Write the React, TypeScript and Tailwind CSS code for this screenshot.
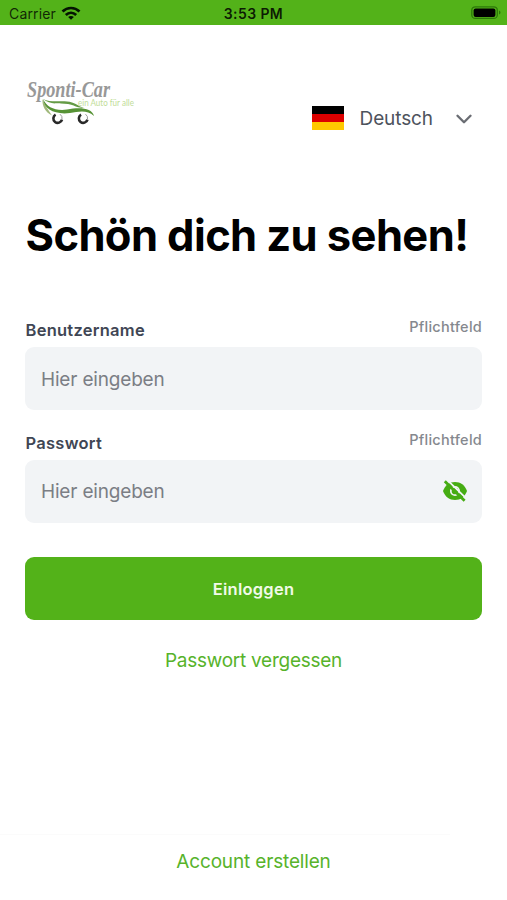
import { ChevronDown } from "lucide-react";

function StatusBar() {
  return (
    <header className="grid h-[25px] grid-cols-3 items-center bg-[#53b219] pt-[2px] text-black">
      <div className="flex items-center gap-[5px] pl-[9px]">
        <span className="text-[14px] leading-5 tracking-[0.15px] text-black/80">Carrier</span>
        <svg className="-mt-px" width="20" height="15" viewBox="0 0 20 15" fill="none" stroke="#041402" strokeWidth="2.7">
          <path d="M1.5 5.5C6.4.8 13.6.8 18.5 5.5M4.8 9C7.9 6.1 12.1 6.1 15.2 9" />
          <path d="M10 13.8L7.1 11C8.7 9.7 11.3 9.7 12.9 11Z" fill="#041402" stroke="none" />
        </svg>
      </div>
      <span className="text-center text-[14px] leading-5 font-semibold tracking-[0.4px] text-black/85">3:53 PM</span>
      <svg className="-mt-px mr-[6px] justify-self-end" width="30" height="14" viewBox="0 0 30 14">
        <rect x=".8" y=".8" width="25.5" height="11.6" rx="3.5" fill="none" stroke="#2c7908" strokeWidth="1.3" />
        <rect x="2.6" y="2.4" width="21.8" height="8.6" rx="2" fill="#000" />
        <path d="M28 4.6c2 .8 2 3.2 0 4z" fill="#2c7908" />
      </svg>
    </header>
  );
}

function Logo() {
  return (
    <svg className="overflow-visible" width="120" height="50" viewBox="0 0 120 50" role="img" aria-label="Sponti-Car">
      <text x="2" y="19.5" textLength="83" lengthAdjust="spacingAndGlyphs" fill="#989898" className="font-['Liberation_Serif',serif] text-[23px] font-bold italic">Sponti-Car</text>
      <text x="53" y="28.7" textLength="56" lengthAdjust="spacingAndGlyphs" fill="#bfdd98" className="font-[Lato,sans-serif] text-[9px]">ein Auto für alle</text>
      <path d="M18 22C27 26.5 38 22.5 47 25.5C53 27.5 54 30 59 30.5C52 31.5 50 28 43 27C33 25.6 26 28.5 18 22Z" fill="#649b45" />
      <path d="M17.5 22C17 29 20 35 27 38.5C23 32 20 29 17.5 22Z" fill="#a1b97c" />
      <path d="M18 22C22 30.5 30 34 42 32.6C55 30 67 31 69 39C62 32.5 54 34.5 45 36C30 38 19 32 18 22Z" fill="#579336" />
      <g fill="none" stroke="#292929" strokeWidth="2.6">
        <path d="M30.6 37.6A4.4 4.4 0 1 0 37 42.6" />
        <path d="M56.1 37.6A4.4 4.4 0 1 0 62.5 42.6" />
      </g>
      <g fill="none" stroke="#999" strokeWidth="1">
        <path d="M37 42.3A5 5 0 0 0 35 37.2" />
        <path d="M62.5 42.3A5 5 0 0 0 60.5 37.2" />
      </g>
    </svg>
  );
}

function HiddenEye() {
  return (
    <svg width="26" height="22" viewBox="0 0 26 22" fill="none" aria-hidden="true">
      <path d="M1 11C3 5.2 7.6 2 13 2S23 5.2 25 11C23 16.8 18.4 20 13 20S3 16.8 1 11Z" fill="#46ac13" />
      <circle cx="13" cy="11" r="4.2" stroke="#f2f4f6" strokeWidth="1.7" />
      <path d="M4.8-.4L25 19.2" stroke="#f2f4f6" strokeWidth="1.8" />
      <path d="M2.8 1.3L22.6 20.8" stroke="#46ac13" strokeWidth="2.8" />
    </svg>
  );
}

function Field({ label, secret = false }: { label: string; secret?: boolean }) {
  return (
    <label className="block">
      <span className="flex h-[29px] justify-between">
        <span className="pt-[2px] pl-[0.5px] text-[16.5px] leading-5 font-semibold tracking-[0.26px] text-[#404654]">{label}</span>
        <span className="text-[14.5px] leading-[18px] font-medium tracking-[0.25px] text-[#85888e]">Pflichtfeld</span>
      </span>
      <span className="flex h-[63px] items-center rounded-[9px] bg-[#f2f4f6] pr-[14px] pl-4">
        <input
          type={secret ? "password" : "text"}
          placeholder="Hier eingeben"
          className="min-w-0 flex-1 bg-transparent pt-[2px] text-[19px] leading-6 tracking-[-0.18px] text-[#7b7e85] outline-none placeholder:text-[#7b7e85]"
        />
        {secret && <HiddenEye />}
      </span>
    </label>
  );
}

export default function App() {
  return (
    <div className="flex h-[900px] w-[507px] flex-col overflow-hidden bg-white font-[Inter,sans-serif]">
      <StatusBar />
      <main className="flex flex-1 flex-col px-[25px]">
        <div className="flex justify-between pt-[52px]">
          <Logo />
          <button className="mt-[24px] mr-[5px] flex h-[34px] items-center">
            <span className="flex h-[24px] w-8 flex-col">
              <span className="flex-1 bg-black" />
              <span className="flex-1 bg-[#dc0000]" />
              <span className="flex-1 bg-[#ffc800]" />
            </span>
            <span className="mt-[2px] ml-4 text-[19px] leading-6 tracking-[-0.1px] text-[#4e535d]">Deutsch</span>
            <ChevronDown className="mt-[2px] ml-[18px] text-[#6a6d73]" size={26} strokeWidth={2.2} />
          </button>
        </div>
        <h1 className="mt-[74px] pl-[0.5px] text-[43.5px] leading-[52px] font-bold tracking-[-0.6px] whitespace-nowrap text-black">Schön dich zu sehen!</h1>
        <form className="mt-[57px]">
          <div className="flex flex-col gap-[20.5px]">
            <Field label="Benutzername" />
            <Field label="Passwort" secret />
          </div>
          <button type="button" className="mt-[34.5px] h-[63px] w-full rounded-[9px] bg-[#53b219] pt-px text-[16.5px] font-semibold tracking-[0.25px] text-[#f1fae9]">Einloggen</button>
        </form>
        <button className="mt-[29px] self-center text-[19px] leading-6 tracking-[-0.26px] text-[#57b32b]">Passwort vergessen</button>
      </main>
      <footer className="flex h-[66px] flex-col">
        <div className="h-px w-[450px] bg-[#fbfbfb]" />
        <button className="mt-[15px] self-center text-[19px] leading-6 tracking-[-0.16px] text-[#57b32b]">Account erstellen</button>
      </footer>
    </div>
  );
}
